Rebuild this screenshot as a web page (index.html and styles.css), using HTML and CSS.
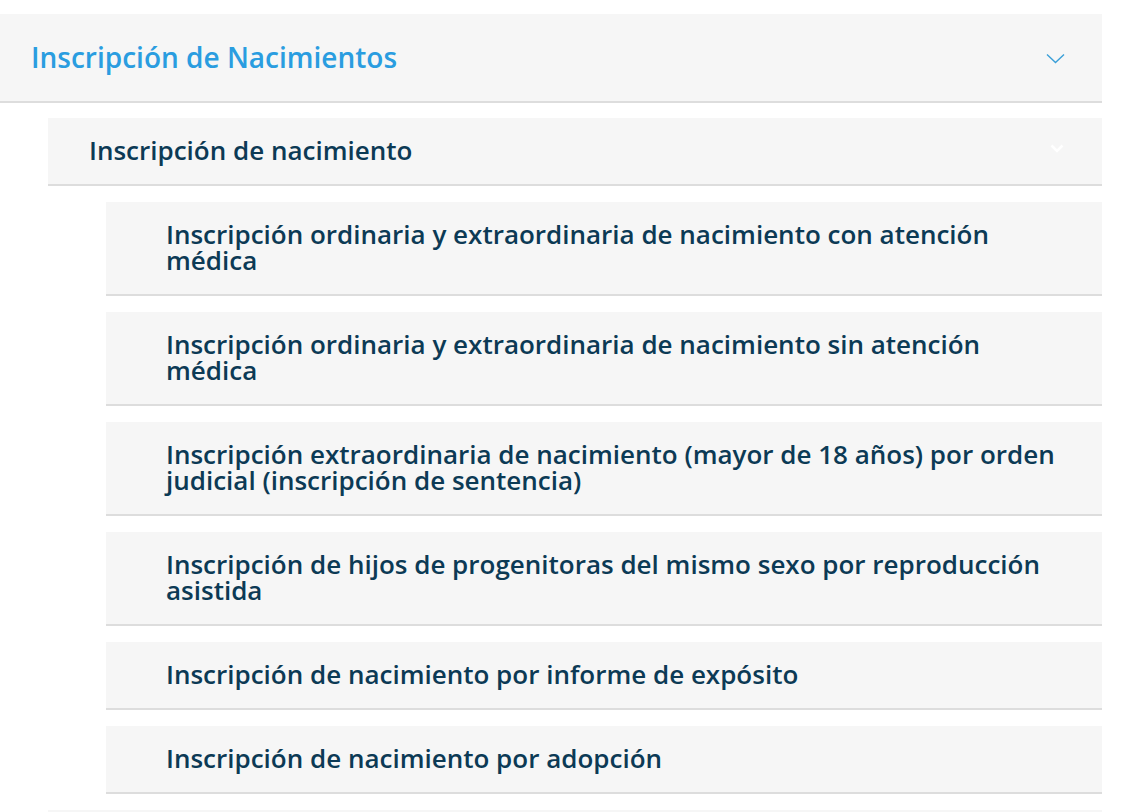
FILE: index.html
```html
<!DOCTYPE html>
<html lang="es">
<head>
<meta charset="utf-8">
<title>Inscripción de Nacimientos</title>
<link rel="stylesheet" href="styles.css">
</head>
<body>
<div class="page">
  <section class="acc">
    <div class="acc-head">
      <span class="acc-title">Inscripción de Nacimientos</span>
      <svg class="chev-blue" width="19" height="11" viewBox="0 0 19 11"><path d="M1 1.5 L9.5 9.5 L18 1.5" fill="none" stroke="#3a9fd8" stroke-width="1.4"/></svg>
    </div>
    <div class="sub">
      <div class="sub-head">
        <span class="sub-title">Inscripción de nacimiento</span>
        <svg class="chev-white" width="14" height="9" viewBox="0 0 14 9"><path d="M1.5 1.5 L7 7 L12.5 1.5" fill="none" stroke="#ffffff" stroke-width="2.6"/></svg>
      </div>
      <ul class="items">
        <li class="item">Inscripción ordinaria y extraordinaria de nacimiento con atención médica</li>
        <li class="item">Inscripción ordinaria y extraordinaria de nacimiento sin atención médica</li>
        <li class="item">Inscripción extraordinaria de nacimiento (mayor de 18 años) por orden judicial (inscripción de sentencia)</li>
        <li class="item">Inscripción de hijos de progenitoras del mismo sexo por reproducción asistida</li>
        <li class="item">Inscripción de nacimiento por informe de expósito</li>
        <li class="item">Inscripción de nacimiento por adopción</li>
      </ul>
    </div>
    <div class="sub next"></div>
  </section>
</div>
</body>
</html>
```

FILE: styles.css
```css
* { box-sizing: border-box; }
html, body { margin: 0; padding: 0; background: #ffffff; }
body { font-family: "Open Sans", "Liberation Sans", sans-serif; }
.page { padding: 14px 25px 0 0; }
.acc { display: flex; flex-direction: column; }
.acc-head {
  display: flex;
  align-items: center;
  justify-content: space-between;
  height: 89px;
  padding: 0 37px 0 31px;
  background: #f6f6f6;
  border-bottom: 2px solid #dddddd;
}
.acc-title {
  color: #2a9de0;
  font-size: 28px;
  font-weight: 600;
  line-height: 1;
  margin-top: -1px;
}
.chev-blue { margin-top: 2px; }
.sub { margin: 15px 0 0 48px; display: flex; flex-direction: column; }
.sub-head {
  display: flex;
  align-items: center;
  justify-content: space-between;
  height: 68px;
  padding: 0 38px 0 41px;
  background: #f6f6f6;
  border-bottom: 2px solid #dddddd;
}
.sub-title {
  color: #0c3a55;
  font-size: 26px;
  font-weight: 600;
  line-height: 26px;
  margin-top: -3px;
}
.chev-white { margin-top: -6px; }
.items {
  list-style: none;
  margin: 16px 0 0 58px;
  padding: 0;
  display: flex;
  flex-direction: column;
  gap: 16px;
}
.item {
  background: #f6f6f6;
  border-bottom: 2px solid #dddddd;
  padding: 19px 40px 21px 60px;
  color: #0c3a55;
  font-size: 26px;
  font-weight: 600;
  line-height: 26px;
}
.sub.next { margin-top: 16px; height: 40px; background: #f6f6f6; }
```
